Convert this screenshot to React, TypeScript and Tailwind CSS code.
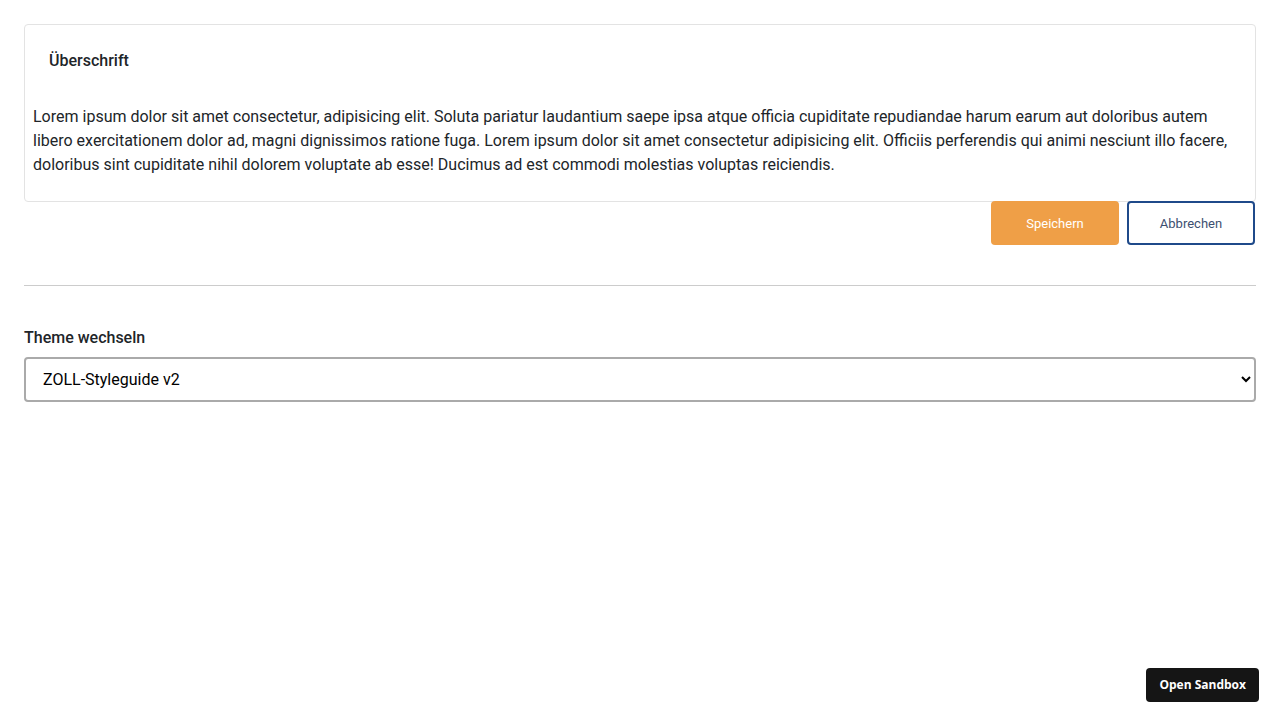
export default function App() {
  return (
    <div className="min-h-screen bg-white font-['Roboto',sans-serif] text-[#212529] px-6 pt-6">
      <div className="border border-[#e3e3e3] rounded">
        <h2 className="px-6 pt-6 text-base leading-6 font-medium">Überschrift</h2>
        <p className="px-2 mt-8 pb-6 text-base leading-6">
          Lorem ipsum dolor sit amet consectetur, adipisicing elit. Soluta pariatur laudantium saepe ipsa atque officia cupiditate repudiandae harum earum aut doloribus autem libero exercitationem dolor ad, magni dignissimos ratione fuga. Lorem ipsum dolor sit amet consectetur adipisicing elit. Officiis perferendis qui animi nesciunt illo facere, doloribus sint cupiditate nihil dolorem voluptate ab esse! Ducimus ad est commodi molestias voluptas reiciendis.
        </p>
      </div>

      <div className="flex justify-end gap-2 -mt-px pr-px">
        <button className="w-32 h-11 rounded bg-[#ef9f47] text-white text-[13px] pt-px">Speichern</button>
        <button className="w-32 h-11 rounded border-2 border-[#1f4a8a] bg-white text-[#3c4f70] text-[13px] pt-px">
          Abbrechen
        </button>
      </div>

      <hr className="mt-10 border-0 border-t border-[#cccccc]" />

      <label className="block mt-[40px] text-base leading-6 font-medium">Theme wechseln</label>
      <select className="mt-[7px] block w-full h-[45px] border-2 border-[#aaaaaa] rounded bg-white pl-[13px] pr-2 text-base text-black">
        <option>ZOLL-Styleguide v2</option>
        <option>ZOLL-Styleguide v1</option>
      </select>

      <button className="fixed right-[21px] bottom-[18px] h-[34px] px-[13px] rounded bg-[#151515] text-white text-[12px] font-bold font-['Open_Sans',sans-serif]">
        Open Sandbox
      </button>
    </div>
  );
}
